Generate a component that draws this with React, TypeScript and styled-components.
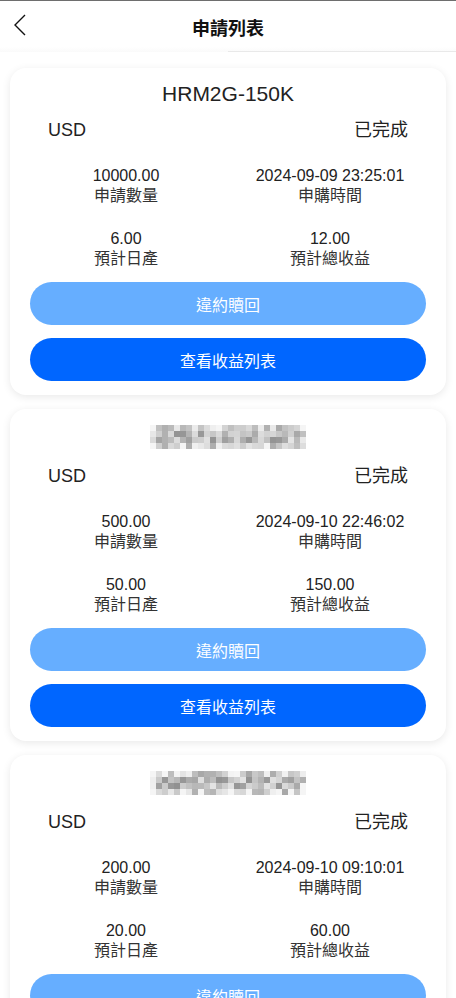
import React from "react";
import styled, { createGlobalStyle } from "styled-components";

const GlobalStyle = createGlobalStyle`
  html, body {
    margin: 0;
    padding: 0;
    background: #ffffff;
  }
  body {
    font-family: "Liberation Sans", "Noto Sans CJK TC", Arial, sans-serif;
    color: #222;
    border-top: 1px solid #6e6e6e;
  }
`;

type Order = {
  title?: string;
  amount: string;
  time: string;
  daily: string;
  total: string;
  seed: number;
};

const orders: Order[] = [
  { title: "HRM2G-150K", amount: "10000.00", time: "2024-09-09 23:25:01", daily: "6.00", total: "12.00", seed: 3 },
  { amount: "500.00", time: "2024-09-10 22:46:02", daily: "50.00", total: "150.00", seed: 11 },
  { amount: "200.00", time: "2024-09-10 09:10:01", daily: "20.00", total: "60.00", seed: 29 },
];

// pixelated (mosaic) product name
const Mosaic = ({ seed }: { seed: number }) => {
  const cols = 26;
  const rows = 4;
  const cells = [];
  let s = seed * 9301 + 49297;
  for (let r = 0; r < rows; r++) {
    for (let c = 0; c < cols; c++) {
      s = (s * 9301 + 49297) % 233280;
      const rnd = s / 233280;
      let v = 145 + Math.round(rnd * 85);
      if (r === 0 || r === rows - 1) v += 22;
      if (c === 0 || c === cols - 1) v += 30;
      v = Math.min(v, 245);
      cells.push(<rect key={`${r}-${c}`} x={c * 6} y={r * 6} width={6} height={6} fill={`rgb(${v},${v},${v})`} />);
    }
  }
  return (
    <MosaicSvg width={156} height={24} viewBox="0 0 156 24">
      {cells}
    </MosaicSvg>
  );
};

const App = () => {
  return (
    <>
      <GlobalStyle />
      <Header>
        <BackButton aria-label="back">
          <svg width="14" height="22" viewBox="0 0 14 22">
            <polyline points="12,1 2,11 12,21" fill="none" stroke="#111" strokeWidth="1.4" />
          </svg>
        </BackButton>
        <Title>申請列表</Title>
      </Header>

      <List>
        {orders.map((o, i) => (
          <Card key={i}>
            {o.title ? <CardTitle>{o.title}</CardTitle> : <Mosaic seed={o.seed} />}
            <StatusRow>
              <span>USD</span>
              <span>已完成</span>
            </StatusRow>
            <InfoGrid>
              <Info>
                <Value>{o.amount}</Value>
                <Label>申請數量</Label>
              </Info>
              <Info>
                <Value>{o.time}</Value>
                <Label>申購時間</Label>
              </Info>
              <Info>
                <Value>{o.daily}</Value>
                <Label>預計日產</Label>
              </Info>
              <Info>
                <Value>{o.total}</Value>
                <Label>預計總收益</Label>
              </Info>
            </InfoGrid>
            <Actions>
              <ActionButton $light>違約贖回</ActionButton>
              <ActionButton>查看收益列表</ActionButton>
            </Actions>
          </Card>
        ))}
      </List>
    </>
  );
};

export default App;

const Header = styled.header`
  position: relative;
  height: 51px;
  display: flex;
  align-items: center;
  justify-content: center;
  background: linear-gradient(to bottom, #fff 90%, #fafafa 100%);

  &::after {
    content: "";
    position: absolute;
    left: 50%;
    right: 0;
    bottom: 0;
    height: 1px;
    background: #e9e9e9;
  }
`;

const BackButton = styled.button`
  position: absolute;
  left: 13px;
  top: 13px;
  padding: 0;
  border: none;
  background: transparent;
  display: flex;
`;

const Title = styled.h1`
  margin: 0;
  font-size: 18px;
  font-weight: 700;
  color: #111;
`;

const List = styled.main`
  display: flex;
  flex-direction: column;
  gap: 14px;
  padding: 16px 10px 20px;
`;

const Card = styled.section`
  background: #fff;
  border-radius: 16px;
  box-shadow: 0 2px 8px rgba(0, 0, 0, 0.09);
  padding: 12px 20px 14px;
  display: flex;
  flex-direction: column;
`;

const CardTitle = styled.div`
  text-align: center;
  font-size: 21px;
  line-height: 28px;
  color: #222;
`;

const MosaicSvg = styled.svg`
  display: block;
  margin: 4px auto 5px;
`;

const StatusRow = styled.div`
  margin-top: 10px;
  padding: 0 18px;
  display: flex;
  justify-content: space-between;
  font-size: 18px;
  line-height: 24px;
  color: #222;
`;

const InfoGrid = styled.div`
  margin: 24px -6px 0;
  display: grid;
  grid-template-columns: 1fr 1fr;
  row-gap: 23px;
`;

const Info = styled.div`
  display: flex;
  flex-direction: column;
  align-items: center;
`;

const Value = styled.div`
  font-size: 16px;
  line-height: 20px;
  color: #222;
`;

const Label = styled.div`
  font-size: 16px;
  line-height: 20px;
  color: #333;
`;

const Actions = styled.div`
  margin-top: 13px;
  display: flex;
  flex-direction: column;
  gap: 13px;
`;

const ActionButton = styled.button<{ $light?: boolean }>`
  height: 43px;
  border: none;
  border-radius: 22px;
  background: ${(p) => (p.$light ? "#66aeff" : "#0066ff")};
  color: #fff;
  font-family: inherit;
  font-size: 16px;
`;
